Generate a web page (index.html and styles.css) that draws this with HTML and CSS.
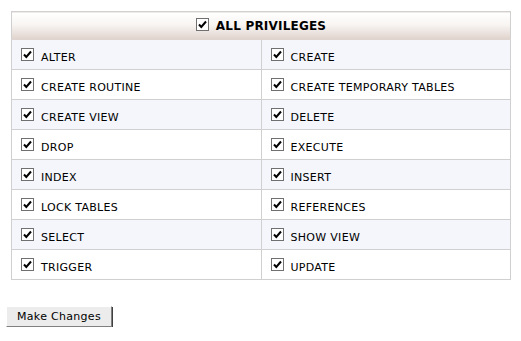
FILE: index.html
```html
<!DOCTYPE html>
<html lang="en">
<head>
    <meta charset="UTF-8">
    <title>Privileges</title>
    <link rel="stylesheet" href="styles.css">
</head>
<body>

    <div class="wrap">
        <table class="privs">
            <tr class="head">
                <th colspan="2"><span class="cb"><svg viewBox="0 0 11 11"><path d="M2 5.5 L4.3 8 L9 2.5" /></svg></span>ALL PRIVILEGES</th>
            </tr>
            <tr class="alt">
                <td><span class="cb"><svg viewBox="0 0 11 11"><path d="M2 5.5 L4.3 8 L9 2.5" /></svg></span>ALTER</td>
                <td><span class="cb"><svg viewBox="0 0 11 11"><path d="M2 5.5 L4.3 8 L9 2.5" /></svg></span>CREATE</td>
            </tr>
            <tr>
                <td><span class="cb"><svg viewBox="0 0 11 11"><path d="M2 5.5 L4.3 8 L9 2.5" /></svg></span>CREATE ROUTINE</td>
                <td><span class="cb"><svg viewBox="0 0 11 11"><path d="M2 5.5 L4.3 8 L9 2.5" /></svg></span>CREATE TEMPORARY TABLES</td>
            </tr>
            <tr class="alt">
                <td><span class="cb"><svg viewBox="0 0 11 11"><path d="M2 5.5 L4.3 8 L9 2.5" /></svg></span>CREATE VIEW</td>
                <td><span class="cb"><svg viewBox="0 0 11 11"><path d="M2 5.5 L4.3 8 L9 2.5" /></svg></span>DELETE</td>
            </tr>
            <tr>
                <td><span class="cb"><svg viewBox="0 0 11 11"><path d="M2 5.5 L4.3 8 L9 2.5" /></svg></span>DROP</td>
                <td><span class="cb"><svg viewBox="0 0 11 11"><path d="M2 5.5 L4.3 8 L9 2.5" /></svg></span>EXECUTE</td>
            </tr>
            <tr class="alt">
                <td><span class="cb"><svg viewBox="0 0 11 11"><path d="M2 5.5 L4.3 8 L9 2.5" /></svg></span>INDEX</td>
                <td><span class="cb"><svg viewBox="0 0 11 11"><path d="M2 5.5 L4.3 8 L9 2.5" /></svg></span>INSERT</td>
            </tr>
            <tr>
                <td><span class="cb"><svg viewBox="0 0 11 11"><path d="M2 5.5 L4.3 8 L9 2.5" /></svg></span>LOCK TABLES</td>
                <td><span class="cb"><svg viewBox="0 0 11 11"><path d="M2 5.5 L4.3 8 L9 2.5" /></svg></span>REFERENCES</td>
            </tr>
            <tr class="alt">
                <td><span class="cb"><svg viewBox="0 0 11 11"><path d="M2 5.5 L4.3 8 L9 2.5" /></svg></span>SELECT</td>
                <td><span class="cb"><svg viewBox="0 0 11 11"><path d="M2 5.5 L4.3 8 L9 2.5" /></svg></span>SHOW VIEW</td>
            </tr>
            <tr>
                <td><span class="cb"><svg viewBox="0 0 11 11"><path d="M2 5.5 L4.3 8 L9 2.5" /></svg></span>TRIGGER</td>
                <td><span class="cb"><svg viewBox="0 0 11 11"><path d="M2 5.5 L4.3 8 L9 2.5" /></svg></span>UPDATE</td>
            </tr>
        </table>

        <button class="submit">Make Changes</button>
    </div>

</body>
</html>
```

FILE: styles.css
```css
body{
    margin: 0;
    background: #fff;
    font-family: "DejaVu Sans", Verdana, sans-serif;
    font-size: 11px;
    color: #000;
}

.wrap{
    padding: 11px 0 0 11px;
}

.privs{
    width: 500px;
    border-collapse: collapse;
    border: 1px solid #d0d0d0;
}

.privs th{
    height: 27px;
    padding: 0;
    font-size: 12px;
    font-weight: bold;
    letter-spacing: 0.2px;
    text-align: center;
    background: linear-gradient(#ffffff 0%, #f8f5f3 45%, #e0d3cc 100%);
    border-bottom: 1px solid #ded5d0;
}

.privs th .cb{
    vertical-align: -1px;
}

.privs td{
    width: 50%;
    height: 26px;
    padding: 3px 0 0 9px;
    border: 1px solid #d0d0d0;
    vertical-align: middle;
    letter-spacing: 0.3px;
}

.privs tr.alt td{
    background: #f4f6fc;
}

.cb{
    display: inline-block;
    width: 11px;
    height: 11px;
    border: 1px solid #707070;
    background: #fff;
    vertical-align: 0;
    margin-right: 7px;
}

.cb svg{
    display: block;
    width: 11px;
    height: 11px;
    fill: none;
    stroke: #000;
    stroke-width: 2;
}

.submit{
    margin: 26px 0 0 -5px;
    width: 106px;
    height: 21px;
    padding: 0;
    font-family: "DejaVu Sans", Verdana, sans-serif;
    font-size: 11px;
    letter-spacing: 0.3px;
    color: #000;
    background: #ececec;
    border: 1px solid;
    border-color: #fff #808080 #808080 #fff;
    box-shadow: 1px 1px 0 #404040;
}
```
